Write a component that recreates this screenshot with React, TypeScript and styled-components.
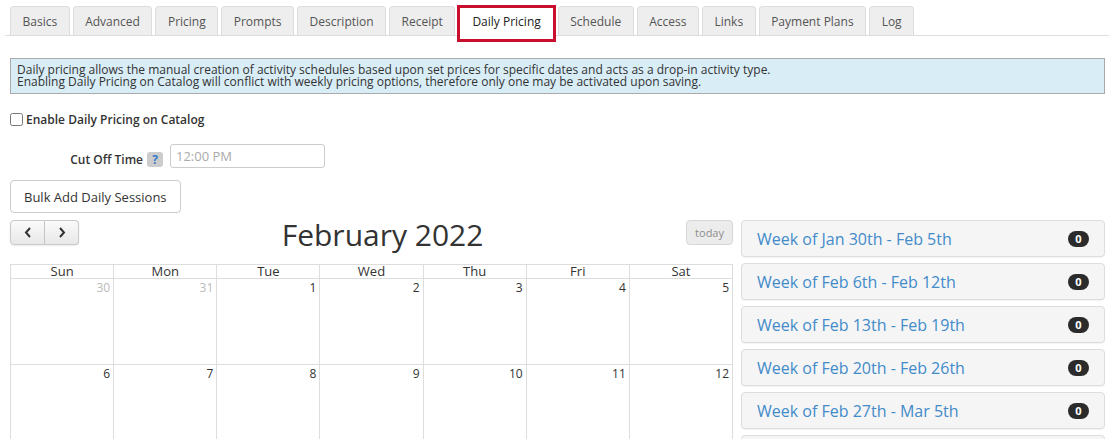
import React from "react"
import styled, { createGlobalStyle, css } from "styled-components"

const GlobalStyle = createGlobalStyle`
  body {
    margin: 0;
    background: #fff;
    color: #333;
    font-family: "Open Sans", "Liberation Sans", sans-serif;
  }
`

const TabBar = styled.ul`
  display: flex;
  align-items: flex-end;
  gap: 3px;
  list-style: none;
  margin: 0 0 0 5px;
  padding: 6px 0 0 5px;
  border-bottom: 1px solid #ddd;
`

const Tab = styled.li<{ $active?: boolean }>`
  position: relative;
  box-sizing: border-box;
  height: ${p => (p.$active ? "30px" : "29px")};
  margin-bottom: ${p => (p.$active ? "-1px" : "0")};
  display: flex;
  align-items: center;
  padding: ${p => (p.$active ? "0 13px" : "0 11.5px")};
  border: 1px solid #ddd;
  border-bottom: none;
  border-radius: 4px 4px 0 0;
  background: ${p => (p.$active ? "#fff" : "#eee")};
  color: ${p => (p.$active ? "#222" : "#555")};
  font-size: 12px;
  white-space: nowrap;

  ${p =>
    p.$active &&
    css`
      &::after {
        content: "";
        position: absolute;
        left: -2px;
        right: -2px;
        top: -2px;
        bottom: -6px;
        border: 3px solid #c8102e;
      }
    `}
`

const Content = styled.div`
  padding: 0 4px 0 10px;
`

const Notice = styled.div`
  margin-top: 22px;
  padding: 5px 6px;
  border: 1px solid #aaa;
  background: #d9edf7;
  font-size: 12px;
  line-height: 12px;
  color: #333;
`

const CheckRow = styled.label`
  display: flex;
  align-items: center;
  gap: 3px;
  height: 16px;
  margin-top: 17px;
  font-size: 12px;
  font-weight: 600;
`

const Check = styled.input`
  margin: 0;
  width: 13px;
  height: 13px;
`

const FieldRow = styled.div`
  display: flex;
  align-items: center;
  height: 24px;
  margin-top: 17px;
`

const FieldLabel = styled.label`
  width: 133px;
  margin-top: 6px;
  text-align: right;
  font-size: 12px;
  font-weight: 600;
`

const Help = styled.span`
  display: flex;
  align-items: center;
  justify-content: center;
  width: 16px;
  height: 15px;
  margin: 6px 0 0 4px;
  border-radius: 3px;
  background: #ccc;
  color: #3a7bc8;
  font-size: 12px;
  font-weight: 700;
`

const TimeInput = styled.input`
  box-sizing: border-box;
  width: 155px;
  height: 24px;
  margin-left: 7px;
  padding: 0 5px;
  border: 1px solid #ccc;
  border-radius: 3px;
  font: 13px "Open Sans", sans-serif;
  color: #555;

  &::placeholder {
    color: #aaa;
  }
`

const BulkButton = styled.button`
  display: block;
  height: 33px;
  margin-top: 12px;
  padding: 0 13px;
  border: 1px solid #ccc;
  border-radius: 4px;
  background: #fff;
  color: #333;
  font: 13px "Open Sans", sans-serif;
`

const Main = styled.div`
  display: grid;
  grid-template-columns: 723px 1fr;
  gap: 8px;
  margin-top: 7px;
`

const Toolbar = styled.div`
  display: flex;
  align-items: flex-start;
  height: 30px;
  margin-bottom: 14px;
`

const NavGroup = styled.div`
  display: flex;
`

const NavButton = styled.button<{ $side: "left" | "right" }>`
  display: flex;
  align-items: center;
  justify-content: center;
  width: ${p => (p.$side === "left" ? "35px" : "34px")};
  height: 25px;
  padding: 0;
  border: 1px solid #c9c9c9;
  border-left-width: ${p => (p.$side === "left" ? "1px" : "0")};
  border-radius: ${p => (p.$side === "left" ? "4px 0 0 4px" : "0 4px 4px 0")};
  background: linear-gradient(#fafafa, #e8e8e8);
  box-shadow: inset 0 1px 0 rgba(255, 255, 255, 0.3), 0 1px 2px rgba(0, 0, 0, 0.08);
  color: #333;
`

const Title = styled.h2`
  flex: 1;
  margin: 0;
  text-align: center;
  font-size: 30px;
  line-height: 30px;
  font-weight: 400;
  color: #333;
`

const TodayButton = styled.button`
  height: 25px;
  padding: 0 8px;
  border: 1px solid #d6d6d6;
  border-radius: 4px;
  background: #ececec;
  color: #8c8c8c;
  font: 11px "Open Sans", sans-serif;
`

const Grid = styled.div`
  border-top: 1px solid #ddd;
  border-left: 1px solid #ddd;
`

const Row = styled.div<{ $head?: boolean }>`
  display: grid;
  grid-template-columns: repeat(7, 1fr);
  height: ${p => (p.$head ? "auto" : "86px")};
`

const HeadCell = styled.div`
  border-right: 1px solid #ddd;
  border-bottom: 1px solid #ddd;
  text-align: center;
  font-size: 13px;
  line-height: 13px;
  color: #333;
`

const DayCell = styled.div<{ $other?: boolean }>`
  border-right: 1px solid #ddd;
  border-bottom: 1px solid #ddd;
  padding: 1px 3px 0 0;
  text-align: right;
  font-size: 12px;
  line-height: 16px;
  color: ${p => (p.$other ? "#bbb" : "#333")};
`

const WeekList = styled.div`
  display: flex;
  flex-direction: column;
  gap: 6px;
`

const WeekPanel = styled.div`
  box-sizing: border-box;
  height: 37px;
  display: flex;
  align-items: center;
  justify-content: space-between;
  padding: 0 15px;
  border: 1px solid #ddd;
  border-radius: 4px;
  background: #f5f5f5;
  box-shadow: 0 1px 1px rgba(0, 0, 0, 0.05);
`

const WeekTitle = styled.span`
  font-size: 16px;
  color: #428bca;
`

const Count = styled.span`
  display: flex;
  align-items: center;
  justify-content: center;
  min-width: 21px;
  height: 16px;
  border-radius: 8px;
  background: #2b2b2b;
  color: #fff;
  font-size: 11px;
  font-weight: 700;
`

const tabs = ["Basics", "Advanced", "Pricing", "Prompts", "Description", "Receipt", "Daily Pricing", "Schedule", "Access", "Links", "Payment Plans", "Log"]
const dayNames = ["Sun", "Mon", "Tue", "Wed", "Thu", "Fri", "Sat"]
const weeks = [
  "Week of Jan 30th - Feb 5th",
  "Week of Feb 6th - Feb 12th",
  "Week of Feb 13th - Feb 19th",
  "Week of Feb 20th - Feb 26th",
  "Week of Feb 27th - Mar 5th",
  "Week of Mar 6th - Mar 12th",
]

// six weeks starting Sunday Jan 30th 2022
const calendarDays = Array.from({ length: 42 }, (_, i) => {
  const d = new Date(2022, 0, 30 + i)
  return { day: d.getDate(), other: d.getMonth() !== 1 }
})

const Chevron = ({ dir }: { dir: "left" | "right" }) => (
  <svg width="8" height="11" viewBox="0 0 8 11">
    <polyline
      points={dir === "left" ? "6,1 2,5.5 6,10" : "2,1 6,5.5 2,10"}
      fill="none"
      stroke="#333"
      strokeWidth="2"
    />
  </svg>
)

const App = () => {
  return (
    <>
      <GlobalStyle />
      <TabBar>
        {tabs.map(t => (
          <Tab key={t} $active={t === "Daily Pricing"}>{t}</Tab>
        ))}
      </TabBar>

      <Content>
        <Notice>
          <div>Daily pricing allows the manual creation of activity schedules based upon set prices for specific dates and acts as a drop-in activity type.</div>
          <div>Enabling Daily Pricing on Catalog will conflict with weekly pricing options, therefore only one may be activated upon saving.</div>
        </Notice>

        <CheckRow>
          <Check type="checkbox" />
          Enable Daily Pricing on Catalog
        </CheckRow>

        <FieldRow>
          <FieldLabel>Cut Off Time</FieldLabel>
          <Help>?</Help>
          <TimeInput placeholder="12:00 PM" />
        </FieldRow>

        <BulkButton>Bulk Add Daily Sessions</BulkButton>

        <Main>
          <div>
            <Toolbar>
              <NavGroup>
                <NavButton $side="left"><Chevron dir="left" /></NavButton>
                <NavButton $side="right"><Chevron dir="right" /></NavButton>
              </NavGroup>
              <Title>February 2022</Title>
              <TodayButton disabled>today</TodayButton>
            </Toolbar>

            <Grid>
              <Row $head>
                {dayNames.map(n => <HeadCell key={n}>{n}</HeadCell>)}
              </Row>
              {[0, 1, 2, 3, 4, 5].map(w => (
                <Row key={w}>
                  {calendarDays.slice(w * 7, w * 7 + 7).map((d, i) => (
                    <DayCell key={i} $other={d.other}>{d.day}</DayCell>
                  ))}
                </Row>
              ))}
            </Grid>
          </div>

          <WeekList>
            {weeks.map(w => (
              <WeekPanel key={w}>
                <WeekTitle>{w}</WeekTitle>
                <Count>0</Count>
              </WeekPanel>
            ))}
          </WeekList>
        </Main>
      </Content>
    </>
  )
}

export default App
